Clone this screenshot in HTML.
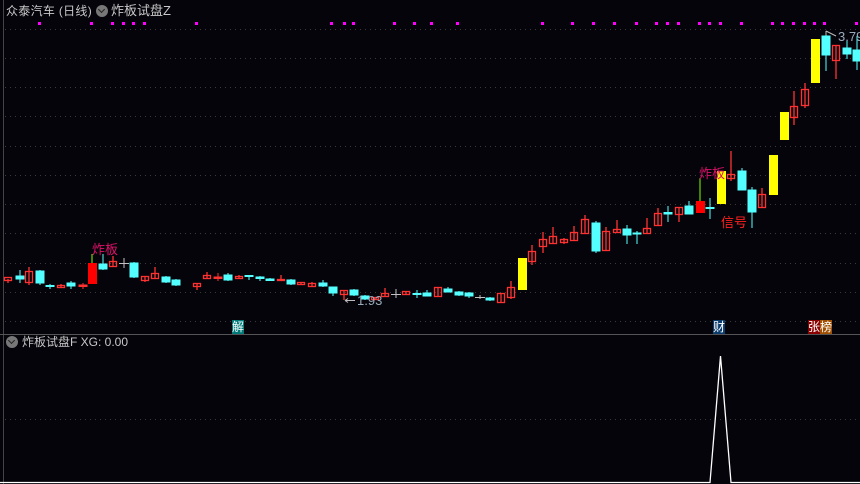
<!DOCTYPE html>
<html><head><meta charset="utf-8"><style>
html,body{margin:0;padding:0;background:#04040a;width:860px;height:484px;overflow:hidden;font-family:"Liberation Sans","Noto Sans CJK SC",sans-serif}
.t{position:absolute;font-size:13px;color:#c8c8c8;white-space:nowrap;line-height:14px}
.ic{position:absolute;width:12px;height:12px;border-radius:50%;background:#777}
.ic:after{content:"";position:absolute;left:3px;top:2px;width:4px;height:4px;border-right:1.5px solid #222;border-bottom:1.5px solid #222;transform:rotate(45deg)}
.bx{position:absolute;font-size:12px;line-height:14px;color:#fff;height:14px;top:320px}
</style></head><body>
<svg width="860" height="484" style="position:absolute;left:0;top:0">
<g stroke="#3a3a3a" stroke-dasharray="1 4" stroke-width="1">
<line x1="5" x2="860" y1="29.5" y2="29.5"/><line x1="5" x2="860" y1="58.5" y2="58.5"/><line x1="5" x2="860" y1="87.5" y2="87.5"/><line x1="5" x2="860" y1="116.5" y2="116.5"/><line x1="5" x2="860" y1="146.5" y2="146.5"/><line x1="5" x2="860" y1="175.5" y2="175.5"/><line x1="5" x2="860" y1="204.5" y2="204.5"/><line x1="5" x2="860" y1="233.5" y2="233.5"/><line x1="5" x2="860" y1="263.5" y2="263.5"/><line x1="5" x2="860" y1="292.5" y2="292.5"/><line x1="5" x2="860" y1="321.5" y2="321.5"/><line x1="5" x2="860" y1="419.5" y2="419.5"/>
</g>
<line x1="3.5" x2="3.5" y1="0" y2="484" stroke="#444"/>
<line x1="0" x2="860" y1="334.5" y2="334.5" stroke="#555"/>
<g fill="#ff00ff">
<rect x="38" y="22" width="3" height="3"/><rect x="90" y="22" width="3" height="3"/><rect x="111" y="22" width="3" height="3"/><rect x="122" y="22" width="3" height="3"/><rect x="132" y="22" width="3" height="3"/><rect x="143" y="22" width="3" height="3"/><rect x="195" y="22" width="3" height="3"/><rect x="330" y="22" width="3" height="3"/><rect x="343" y="22" width="3" height="3"/><rect x="352" y="22" width="3" height="3"/><rect x="393" y="22" width="3" height="3"/><rect x="413" y="22" width="3" height="3"/><rect x="430" y="22" width="3" height="3"/><rect x="456" y="22" width="3" height="3"/><rect x="541" y="22" width="3" height="3"/><rect x="571" y="22" width="3" height="3"/><rect x="592" y="22" width="3" height="3"/><rect x="613" y="22" width="3" height="3"/><rect x="635" y="22" width="3" height="3"/><rect x="655" y="22" width="3" height="3"/><rect x="666" y="22" width="3" height="3"/><rect x="677" y="22" width="3" height="3"/><rect x="698" y="22" width="3" height="3"/><rect x="708" y="22" width="3" height="3"/><rect x="719" y="22" width="3" height="3"/><rect x="740" y="22" width="3" height="3"/><rect x="771" y="22" width="3" height="3"/><rect x="781" y="22" width="3" height="3"/><rect x="792" y="22" width="3" height="3"/><rect x="803" y="22" width="3" height="3"/><rect x="813" y="22" width="3" height="3"/><rect x="823" y="22" width="3" height="3"/><rect x="855" y="22" width="3" height="3"/>
</g>
<g stroke="#ff3232" stroke-width="1.3" fill="none">
<path d="M8 279V283M29 267V285M61 284V288M113 256V266M145 276V282M155 267V278M197 283V290M207 272V278M239 275V279M281 275V280M301 282V285M312 282V287M344 290V300M375 297V300M385 288V296M406 291V294M438 287V296M501 293V303M511 281V299M532 245V265M543 232V253M553 227V243M564 238V244M574 226V240M585 215V233M606 227V250M617 220V232M647 218V233M658 208V225M679 207V222M731 151V181M762 188V207M794 91V125M805 83V108M836 45V79"/>
<rect x="4.5" y="277.5" width="7" height="3"/><rect x="25.5" y="271.5" width="7" height="11"/><rect x="57.5" y="285.5" width="7" height="2"/><rect x="109.5" y="261.5" width="7" height="5"/><rect x="141.5" y="276.5" width="7" height="4"/><rect x="151.5" y="273.5" width="7" height="5"/><rect x="193.5" y="283.5" width="7" height="3"/><rect x="203.5" y="275.5" width="7" height="3"/><rect x="235.5" y="276.5" width="7" height="2"/><rect x="277.5" y="279.5" width="7" height="1"/><rect x="297.5" y="282.5" width="7" height="2"/><rect x="308.5" y="283.5" width="7" height="3"/><rect x="340.5" y="290.5" width="7" height="4"/><rect x="371.5" y="297.5" width="7" height="2"/><rect x="381.5" y="293.5" width="7" height="3"/><rect x="402.5" y="291.5" width="7" height="3"/><rect x="434.5" y="287.5" width="7" height="9"/><rect x="497.5" y="293.5" width="7" height="9"/><rect x="507.5" y="287.5" width="7" height="10"/><rect x="528.5" y="251.5" width="7" height="10"/><rect x="539.5" y="239.5" width="7" height="7"/><rect x="549.5" y="236.5" width="7" height="7"/><rect x="560.5" y="239.5" width="7" height="3"/><rect x="570.5" y="232.5" width="7" height="8"/><rect x="581.5" y="219.5" width="7" height="14"/><rect x="602.5" y="231.5" width="7" height="19"/><rect x="613.5" y="229.5" width="7" height="3"/><rect x="643.5" y="228.5" width="7" height="5"/><rect x="654.5" y="213.5" width="7" height="12"/><rect x="675.5" y="207.5" width="7" height="7"/><rect x="727.5" y="174.5" width="7" height="4"/><rect x="758.5" y="194.5" width="7" height="13"/><rect x="790.5" y="106.5" width="7" height="11"/><rect x="801.5" y="89.5" width="7" height="16"/><rect x="832.5" y="45.5" width="7" height="15"/>
</g>
<g stroke="#ff3232" fill="#ff3232">
<path d="M83 283V289M218 273V281"/>
<rect x="79" y="285" width="8" height="1.5"/><rect x="214" y="277" width="8" height="1.5"/>
</g>
<line x1="92" x2="92" y1="254" y2="263" stroke="#80ff00"/>
<line x1="700" x2="700" y1="178" y2="201" stroke="#80ff00"/>
<rect x="88" y="263" width="9" height="21" fill="#ff0000"/>
<rect x="696" y="201" width="9" height="12" fill="#ff0000"/>
<g stroke="#54ffff" fill="#54ffff">
<path d="M20 270V283M40 270V285M50 284V289M71 281V289M103 254V270M134 262V278M166 276V283M176 279V286M228 273V281M249 276V280M260 276V281M270 278V281M291 279V285M323 280V287M333 287V296M354 289V296M365 295V300M417 290V298M427 290V296M448 287V292M459 291V296M469 292V298M490 297V301M596 221V253M627 225V244M637 231V244M668 206V222M689 201V214M710 198V219M742 168V190M752 187V228M826 35V71M847 40V59M857 36V70"/>
<rect x="16" y="276" width="8" height="3"/><rect x="36" y="271" width="8" height="12"/><rect x="46" y="285.5" width="8" height="1"/><rect x="67" y="283" width="8" height="3"/><rect x="99" y="264" width="8" height="5"/><rect x="130" y="263" width="8" height="14"/><rect x="162" y="277" width="8" height="5"/><rect x="172" y="280" width="8" height="5"/><rect x="224" y="275" width="8" height="5"/><rect x="245" y="275.5" width="8" height="1"/><rect x="256" y="277" width="8" height="1.5"/><rect x="266" y="279" width="8" height="1.5"/><rect x="287" y="280" width="8" height="4"/><rect x="319" y="283" width="8" height="3"/><rect x="329" y="287" width="8" height="6"/><rect x="350" y="290" width="8" height="5"/><rect x="361" y="296" width="8" height="3"/><rect x="413" y="293.5" width="8" height="1"/><rect x="423" y="293" width="8" height="3"/><rect x="444" y="289" width="8" height="3"/><rect x="455" y="292" width="8" height="3"/><rect x="465" y="293" width="8" height="3"/><rect x="486" y="298" width="8" height="2"/><rect x="592" y="223" width="8" height="28"/><rect x="623" y="229" width="8" height="6"/><rect x="633" y="233" width="8" height="1"/><rect x="664" y="212.5" width="8" height="1.5"/><rect x="685" y="206" width="8" height="8"/><rect x="706" y="207.5" width="8" height="1"/><rect x="738" y="171" width="8" height="19"/><rect x="748" y="190" width="8" height="22"/><rect x="822" y="36" width="8" height="19"/><rect x="843" y="48" width="8" height="6"/><rect x="853" y="50" width="8" height="11"/>
</g>
<g stroke="#c0c0c0"><path d="M124 258V268M119 263.5H129M396 289V298M391 294.5H401M480 295V299M475 297.5H485"/></g>
<g fill="#ffff00">
<rect x="518" y="258" width="9" height="32"/><rect x="717" y="171" width="9" height="33"/><rect x="769" y="155" width="9" height="40"/><rect x="780" y="112" width="9" height="28"/><rect x="811" y="39" width="9" height="44"/>
</g>
<path d="M0 482.5H710L720.5 356L731 482.5H860" stroke="#fff" stroke-width="1.3" fill="none"/>
<path d="M345 300.5H355M345 300.5l3-2M345 300.5l3 2" stroke="#bbb" fill="none"/>
<path d="M826 31l10 5M826 31v4" stroke="#bbb" fill="none"/>
</svg>
<div class="t" style="left:6px;top:4px;font-size:12px;letter-spacing:0.3px">众泰汽车 (日线)</div>
<div class="ic" style="left:96px;top:5px"></div>
<div class="t" style="left:111px;top:4px">炸板试盘Z</div>
<div class="ic" style="left:6px;top:336px"></div>
<div class="t" style="left:22px;top:335px;font-size:12px">炸板试盘F XG: 0.00</div>
<div class="t" style="left:92px;top:243px;color:#e0106a">炸板</div>
<div class="t" style="left:699px;top:167px;color:#e0106a">炸板</div>
<div class="t" style="left:721px;top:216px;color:#ff2020">信号</div>
<div class="t" style="left:357px;top:294px;color:#9ab">1.93</div>
<div class="t" style="left:838px;top:30px;color:#9ab">3.79</div>
<div class="bx" style="left:232px;background:#007878">解</div>
<div class="bx" style="left:713px;background:#0a3c6e">财</div>
<div class="bx" style="left:808px;background:#8a0000">张</div>
<div class="bx" style="left:820px;background:#a05000">榜</div>
</body></html>
